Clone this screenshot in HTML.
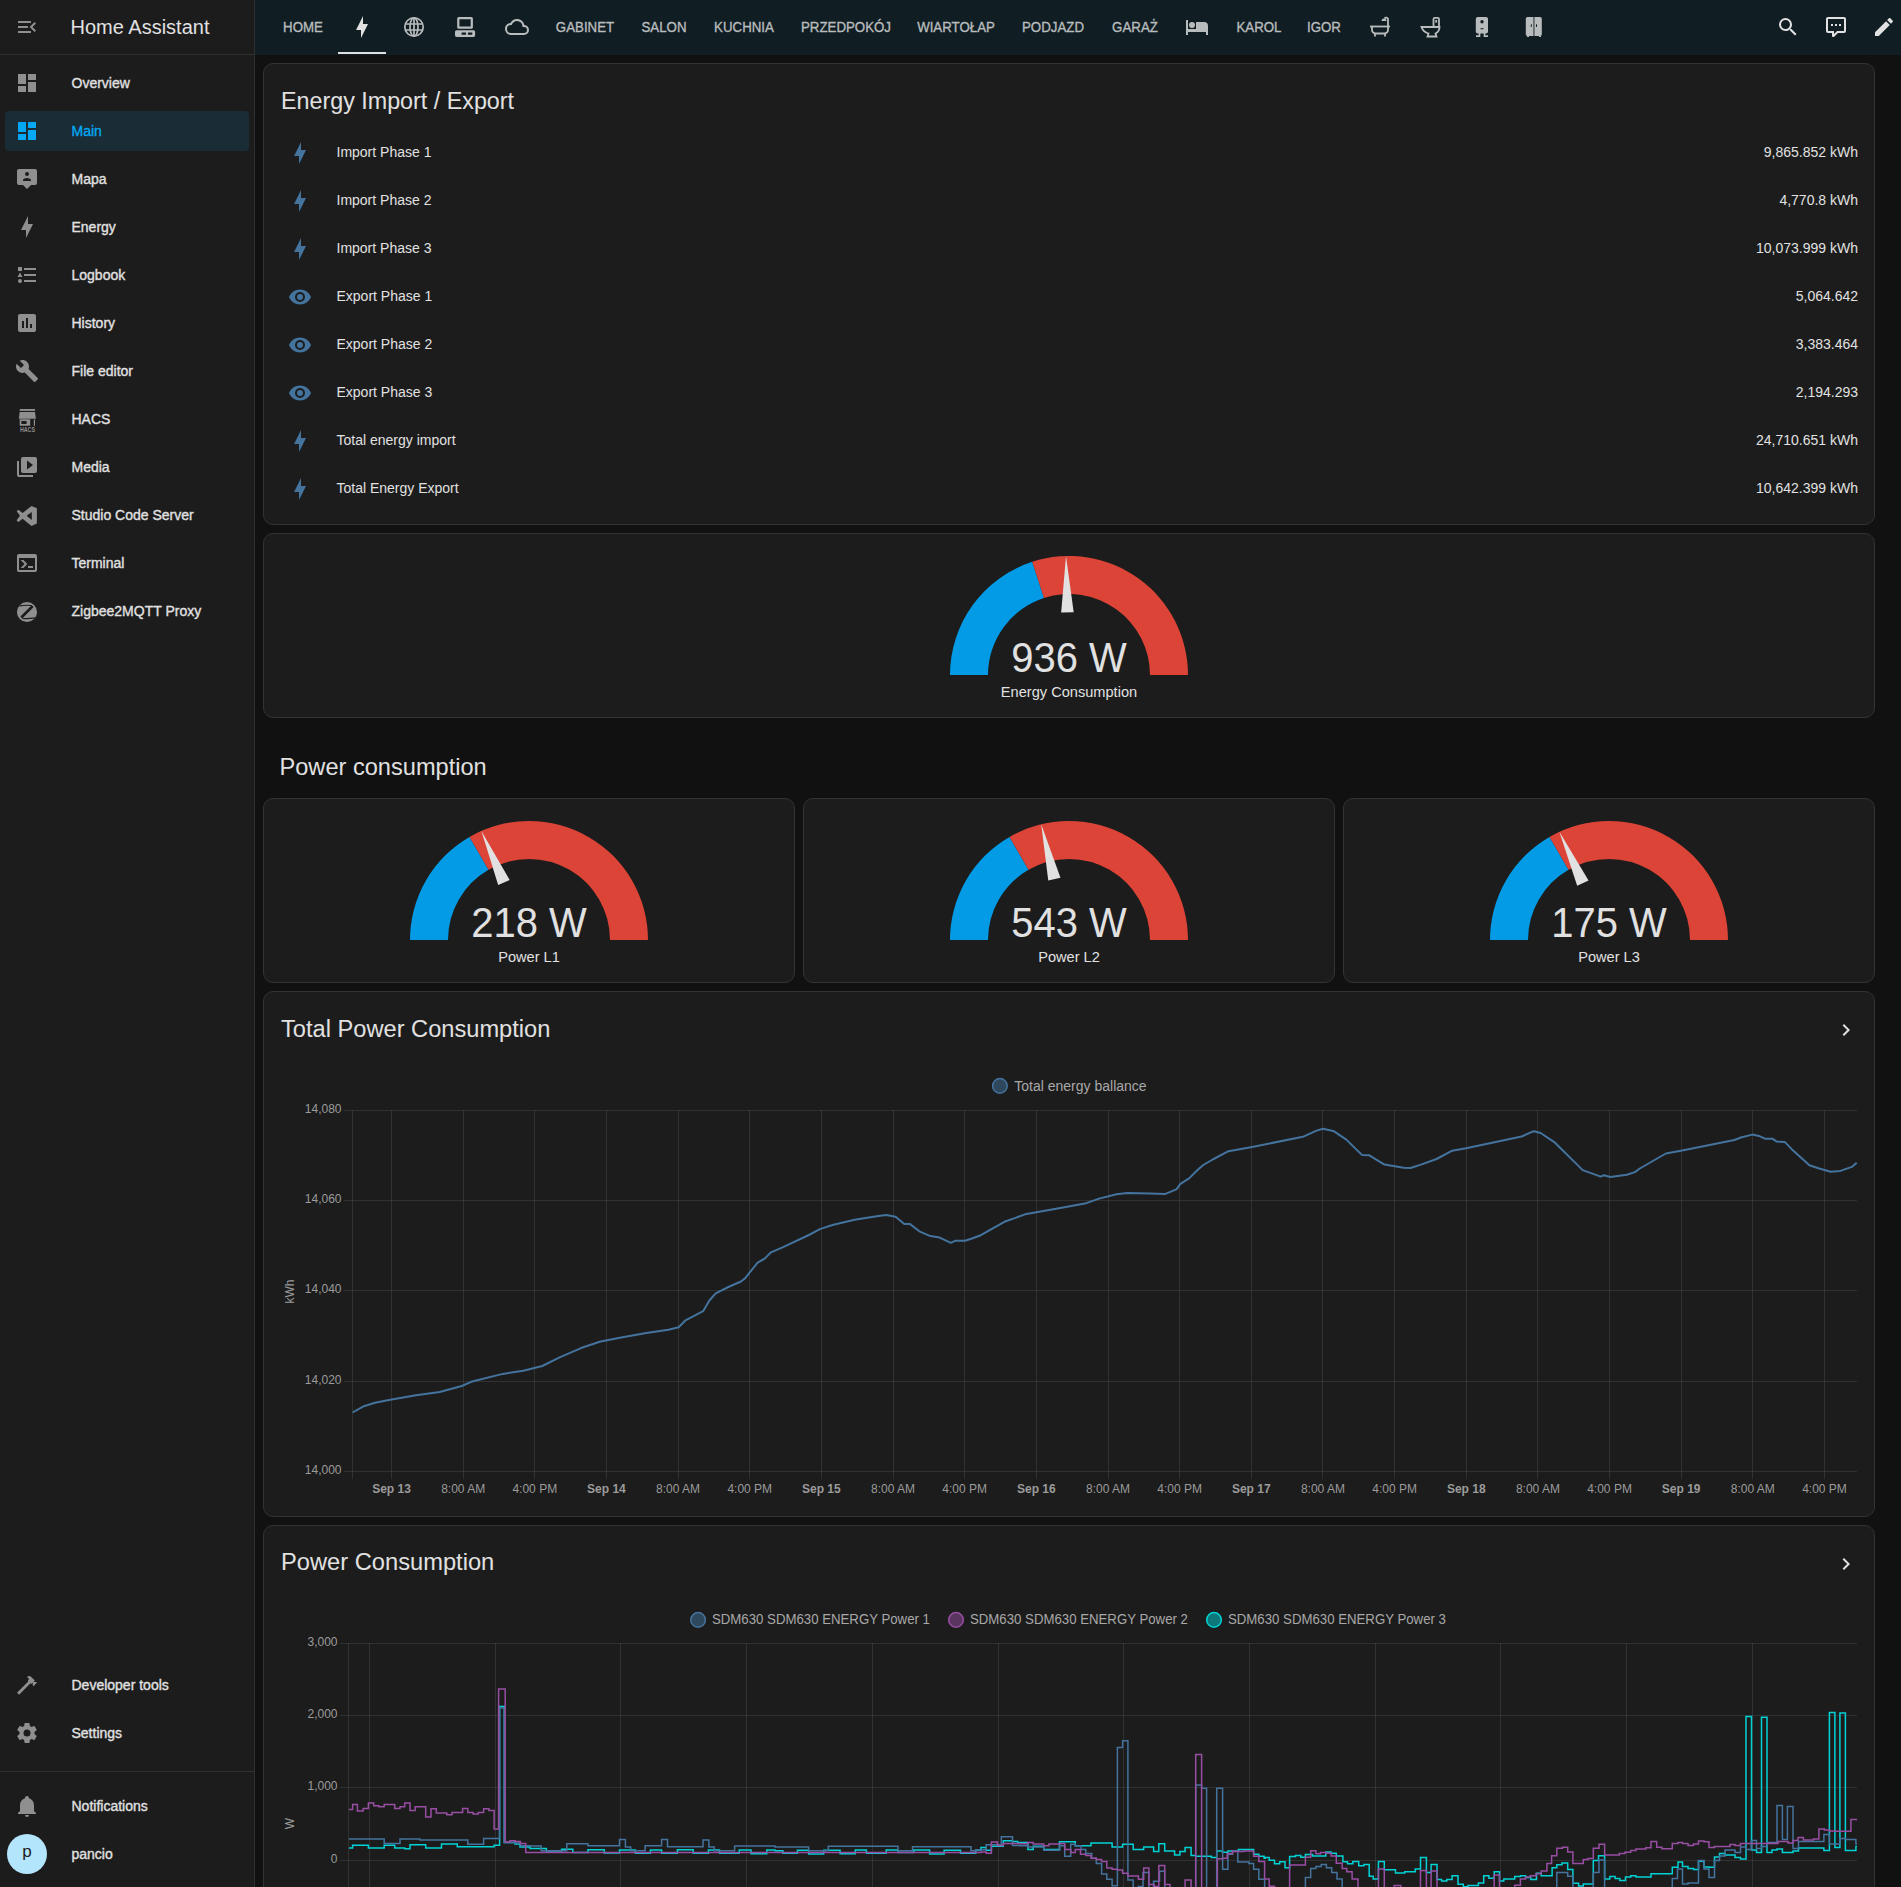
<!DOCTYPE html>
<html><head><meta charset="utf-8">
<style>
*{box-sizing:border-box;margin:0;padding:0}
html,body{width:1901px;height:1887px;overflow:hidden;background:#111111;font-family:"Liberation Sans",sans-serif;color:#e1e1e1}
.t{position:absolute;white-space:nowrap}
.i{position:absolute;overflow:visible}
.r{position:absolute}
.card{position:absolute;background:#1c1c1c;border:1px solid #333333;border-radius:10px}
</style></head><body>

<div class="r" style="left:0px;top:0px;width:254px;height:1887px;background:#1c1c1c;"></div>
<div class="r" style="left:254px;top:0px;width:1px;height:1887px;background:#2f2f2f;"></div>
<div class="r" style="left:0px;top:54px;width:254px;height:1px;background:#2f2f2f;"></div>
<svg class="i" style="left:15px;top:15px;width:24px;height:24px;fill:#8f8f8f;" viewBox="0 0 24 24"><path d="M21,15.61L19.59,17L14.58,12L19.59,7L21,8.39L17.44,12L21,15.61M3,6H16V8H3V6M3,13V11H13V13H3M3,18V16H16V18H3Z"/></svg>
<div class="t" style="top:14.57px;font-size:20px;line-height:25.00px;color:#e1e1e1;left:70.50px;">Home Assistant</div>
<svg class="i" style="left:15px;top:71px;width:24px;height:24px;fill:#8f8f8f;" viewBox="0 0 24 24"><path d="M13,3V9H21V3M13,21H21V11H13M3,21H11V15H3M3,13H11V3H3V13Z"/></svg>
<div class="t" style="top:75.30px;font-size:14px;line-height:17.50px;color:#e1e1e1;-webkit-text-stroke:0.35px #e1e1e1;left:71.50px;">Overview</div>
<div class="r" style="left:5px;top:111px;width:244px;height:40px;background:#1a2c35;border-radius:4px"></div>
<svg class="i" style="left:15px;top:119px;width:24px;height:24px;fill:#03a9f4;" viewBox="0 0 24 24"><path d="M13,3V9H21V3M13,21H21V11H13M3,21H11V15H3M3,13H11V3H3V13Z"/></svg>
<div class="t" style="top:123.30px;font-size:14px;line-height:17.50px;color:#03a9f4;-webkit-text-stroke:0.35px #03a9f4;left:71.50px;">Main</div>
<svg class="i" style="left:15px;top:167px;width:24px;height:24px;fill:#8f8f8f;" viewBox="0 0 24 24"><path d="M4,2H20A2,2 0 0,1 22,4V16A2,2 0 0,1 20,18H16L12,22L8,18H4A2,2 0 0,1 2,16V4A2,2 0 0,1 4,2M16,14V13C16,11.67 13.33,11 12,11C10.67,11 8,11.67 8,13V14H16M12,5A2,2 0 0,0 10,7A2,2 0 0,0 12,9A2,2 0 0,0 14,7A2,2 0 0,0 12,5Z"/></svg>
<div class="t" style="top:171.30px;font-size:14px;line-height:17.50px;color:#e1e1e1;-webkit-text-stroke:0.35px #e1e1e1;left:71.50px;">Mapa</div>
<svg class="i" style="left:15px;top:215px;width:24px;height:24px;fill:#8f8f8f;" viewBox="0 0 24 24"><path d="M11 15H6L13 1V9H18L11 23V15Z"/></svg>
<div class="t" style="top:219.30px;font-size:14px;line-height:17.50px;color:#e1e1e1;-webkit-text-stroke:0.35px #e1e1e1;left:71.50px;">Energy</div>
<svg class="i" style="left:15px;top:263px;width:24px;height:24px;fill:#8f8f8f;" viewBox="0 0 24 24"><path d="M5,9.5L7.5,14H2.5L5,9.5M3,4H7V8H3V4M5,20A2,2 0 0,0 7,18A2,2 0 0,0 5,16A2,2 0 0,0 3,18A2,2 0 0,0 5,20M9,5V7H21V5H9M9,19H21V17H9V19M9,13H21V11H9V13Z"/></svg>
<div class="t" style="top:267.30px;font-size:14px;line-height:17.50px;color:#e1e1e1;-webkit-text-stroke:0.35px #e1e1e1;left:71.50px;">Logbook</div>
<svg class="i" style="left:15px;top:311px;width:24px;height:24px;fill:#8f8f8f;" viewBox="0 0 24 24"><path d="M19 3H5C3.89 3 3 3.89 3 5V19A2 2 0 0 0 5 21H19A2 2 0 0 0 21 19V5C21 3.89 20.1 3 19 3M9 17H7V10H9V17M13 17H11V7H13V17M17 17H15V13H17V17Z"/></svg>
<div class="t" style="top:315.30px;font-size:14px;line-height:17.50px;color:#e1e1e1;-webkit-text-stroke:0.35px #e1e1e1;left:71.50px;">History</div>
<svg class="i" style="left:15px;top:359px;width:24px;height:24px;fill:#8f8f8f;" viewBox="0 0 24 24"><path d="M22.7,19L13.6,9.9C14.5,7.6 14,4.9 12.1,3C10.1,1 7.1,0.6 4.7,1.7L9,6L6,9L1.6,4.7C0.4,7.1 0.9,10.1 2.9,12.1C4.8,14 7.5,14.5 9.8,13.6L18.9,22.7C19.3,23.1 19.9,23.1 20.3,22.7L22.6,20.4C23.1,20 23.1,19.3 22.7,19Z"/></svg>
<div class="t" style="top:363.30px;font-size:14px;line-height:17.50px;color:#e1e1e1;-webkit-text-stroke:0.35px #e1e1e1;left:71.50px;">File editor</div>
<svg class="i" style="left:15px;top:407px;width:24px;height:24px;" viewBox="0 0 24 24"><g fill="#8f8f8f"><rect x="4.7" y="2" width="15.3" height="1.9"/><path d="M4.7 5H20L20.9 11.8H3.8Z"/><path d="M4.7 12.3H15.2V18.8H4.7ZM6.3 14V17.1H11.6V14Z" fill-rule="evenodd"/><rect x="18.8" y="12.5" width="1.2" height="6.3"/><text x="12.45" y="24.6" font-size="6.3" font-family="Liberation Sans" font-weight="bold" text-anchor="middle" textLength="15" lengthAdjust="spacingAndGlyphs">HACS</text></g></svg>
<div class="t" style="top:411.30px;font-size:14px;line-height:17.50px;color:#e1e1e1;-webkit-text-stroke:0.35px #e1e1e1;left:71.50px;">HACS</div>
<svg class="i" style="left:15px;top:455px;width:24px;height:24px;fill:#8f8f8f;" viewBox="0 0 24 24"><path d="M4,6H2V20A2,2 0 0,0 4,22H18V20H4V6M20,2H8A2,2 0 0,0 6,4V16A2,2 0 0,0 8,18H20A2,2 0 0,0 22,16V4A2,2 0 0,0 20,2M12,14.5V5.5L18,10L12,14.5Z"/></svg>
<div class="t" style="top:459.30px;font-size:14px;line-height:17.50px;color:#e1e1e1;-webkit-text-stroke:0.35px #e1e1e1;left:71.50px;">Media</div>
<svg class="i" style="left:15px;top:503px;width:24px;height:24px;" viewBox="0 0 24 24"><path fill="#8f8f8f" fill-rule="evenodd" d="M16.5 3L21.9 5.3V20.6L16.5 22.9L7.6 15.8L4.1 18.5Q3.3 19.1 2.6 18.4L2.1 17.9Q1.5 17.2 2.2 16.6L5 12.85L2.2 9.1Q1.5 8.5 2.1 7.8L2.6 7.3Q3.3 6.6 4.1 7.2L7.6 9.9ZM16.8 9L11.6 12.85L16.8 16.9Z"/></svg>
<div class="t" style="top:507.30px;font-size:14px;line-height:17.50px;color:#e1e1e1;-webkit-text-stroke:0.35px #e1e1e1;left:71.50px;">Studio Code Server</div>
<svg class="i" style="left:15px;top:551px;width:24px;height:24px;fill:#8f8f8f;" viewBox="0 0 24 24"><path d="M20,19V7H4V19H20M20,3A2,2 0 0,1 22,5V19A2,2 0 0,1 20,21H4A2,2 0 0,1 2,19V5C2,3.89 2.9,3 4,3H20M13,17V15H18V17H13M9.58,13L5.57,9H8.4L11.7,12.3C12.09,12.69 12.09,13.33 11.7,13.72L8.42,17H5.59L9.58,13Z"/></svg>
<div class="t" style="top:555.30px;font-size:14px;line-height:17.50px;color:#e1e1e1;-webkit-text-stroke:0.35px #e1e1e1;left:71.50px;">Terminal</div>
<svg class="i" style="left:15px;top:599px;width:24px;height:24px;" viewBox="0 0 24 24"><circle cx="12" cy="13" r="10.05" fill="#8f8f8f"/><g fill="none" stroke="#1c1c1c"><path d="M4.2 6.9Q10 5.9 16.8 6.5" stroke-width="1.1"/><path d="M17.7 7.1L6.3 18.5" stroke-width="2.7"/><path d="M7.4 19.5Q14 19.9 20.3 18.9" stroke-width="1.1"/></g></svg>
<div class="t" style="top:603.30px;font-size:14px;line-height:17.50px;color:#e1e1e1;-webkit-text-stroke:0.35px #e1e1e1;left:71.50px;">Zigbee2MQTT Proxy</div>
<svg class="i" style="left:15px;top:1673px;width:24px;height:24px;fill:#8f8f8f;" viewBox="0 0 24 24"><path d="M2 19.63L13.43 8.2L12.72 7.5L14.14 6.07L12 3.89C13.2 2.7 15.09 2.7 16.27 3.89L19.87 7.5L18.45 8.91H21.29L22 9.62L18.45 13.21L17.74 12.5V9.62L16.27 11.04L15.56 10.33L4.13 21.76L2 19.63Z"/></svg>
<div class="t" style="top:1677.30px;font-size:14px;line-height:17.50px;color:#e1e1e1;-webkit-text-stroke:0.35px #e1e1e1;left:71.50px;">Developer tools</div>
<svg class="i" style="left:15px;top:1721px;width:24px;height:24px;fill:#8f8f8f;" viewBox="0 0 24 24"><path d="M12,15.5A3.5,3.5 0 0,1 8.5,12A3.5,3.5 0 0,1 12,8.5A3.5,3.5 0 0,1 15.5,12A3.5,3.5 0 0,1 12,15.5M19.43,12.97C19.47,12.65 19.5,12.33 19.5,12C19.5,11.67 19.47,11.34 19.43,11L21.54,9.37C21.73,9.22 21.78,8.95 21.66,8.73L19.66,5.27C19.54,5.05 19.27,4.96 19.05,5.05L16.56,6.05C16.04,5.66 15.5,5.32 14.87,5.07L14.5,2.42C14.46,2.18 14.25,2 14,2H10C9.75,2 9.54,2.18 9.5,2.42L9.13,5.07C8.5,5.32 7.96,5.66 7.44,6.05L4.95,5.05C4.73,4.96 4.46,5.05 4.34,5.27L2.34,8.73C2.21,8.95 2.27,9.22 2.46,9.37L4.57,11C4.53,11.34 4.5,11.67 4.5,12C4.5,12.33 4.53,12.65 4.57,12.97L2.46,14.63C2.27,14.78 2.21,15.05 2.34,15.27L4.34,18.73C4.46,18.95 4.73,19.03 4.95,18.95L7.44,17.94C7.96,18.34 8.5,18.68 9.13,18.93L9.5,21.58C9.54,21.82 9.75,22 10,22H14C14.25,22 14.46,21.82 14.5,21.58L14.87,18.93C15.5,18.67 16.04,18.34 16.56,17.94L19.05,18.95C19.27,19.03 19.54,18.95 19.66,18.73L21.66,15.27C21.78,15.05 21.73,14.78 21.54,14.63L19.43,12.97Z"/></svg>
<div class="t" style="top:1725.30px;font-size:14px;line-height:17.50px;color:#e1e1e1;-webkit-text-stroke:0.35px #e1e1e1;left:71.50px;">Settings</div>
<div class="r" style="left:0px;top:1771px;width:254px;height:1px;background:#2f2f2f;"></div>
<svg class="i" style="left:15px;top:1794px;width:24px;height:24px;fill:#8f8f8f;" viewBox="0 0 24 24"><path d="M21,19V20H3V19L5,17V11C5,7.9 7.03,5.17 10,4.29C10,4.19 10,4.1 10,4A2,2 0 0,1 12,2A2,2 0 0,1 14,4C14,4.1 14,4.19 14,4.29C16.97,5.17 19,7.9 19,11V17L21,19M14,21A2,2 0 0,1 12,23A2,2 0 0,1 10,21"/></svg>
<div class="t" style="top:1798.30px;font-size:14px;line-height:17.50px;color:#e1e1e1;-webkit-text-stroke:0.35px #e1e1e1;left:71.50px;">Notifications</div>
<div class="r" style="left:7px;top:1834px;width:40px;height:40px;border-radius:50%;background:#b3e5fc"></div>
<div class="t" style="top:1841.48px;font-size:17px;line-height:21.25px;color:#1c1c1c;left:-373.00px;width:800px;text-align:center;">p</div>
<div class="t" style="top:1846.30px;font-size:14px;line-height:17.50px;color:#e1e1e1;-webkit-text-stroke:0.35px #e1e1e1;left:71.50px;">pancio</div>
<div class="r" style="left:255px;top:0px;width:1646px;height:55px;background:#101e24;"></div>
<div class="t" style="top:18.12px;font-size:14.6px;line-height:18.25px;color:#b9bcbd;-webkit-text-stroke:0.35px #b9bcbd;transform:scaleX(0.91);transform-origin:50% 50%;left:-97.00px;width:800px;text-align:center;">HOME</div>
<div class="t" style="top:18.12px;font-size:14.6px;line-height:18.25px;color:#b9bcbd;-webkit-text-stroke:0.35px #b9bcbd;transform:scaleX(0.91);transform-origin:50% 50%;left:184.50px;width:800px;text-align:center;">GABINET</div>
<div class="t" style="top:18.12px;font-size:14.6px;line-height:18.25px;color:#b9bcbd;-webkit-text-stroke:0.35px #b9bcbd;transform:scaleX(0.91);transform-origin:50% 50%;left:264.00px;width:800px;text-align:center;">SALON</div>
<div class="t" style="top:18.12px;font-size:14.6px;line-height:18.25px;color:#b9bcbd;-webkit-text-stroke:0.35px #b9bcbd;transform:scaleX(0.91);transform-origin:50% 50%;left:344.00px;width:800px;text-align:center;">KUCHNIA</div>
<div class="t" style="top:18.12px;font-size:14.6px;line-height:18.25px;color:#b9bcbd;-webkit-text-stroke:0.35px #b9bcbd;transform:scaleX(0.91);transform-origin:50% 50%;left:446.00px;width:800px;text-align:center;">PRZEDPOKÓJ</div>
<div class="t" style="top:18.12px;font-size:14.6px;line-height:18.25px;color:#b9bcbd;-webkit-text-stroke:0.35px #b9bcbd;transform:scaleX(0.91);transform-origin:50% 50%;left:556.00px;width:800px;text-align:center;">WIARTOŁAP</div>
<div class="t" style="top:18.12px;font-size:14.6px;line-height:18.25px;color:#b9bcbd;-webkit-text-stroke:0.35px #b9bcbd;transform:scaleX(0.91);transform-origin:50% 50%;left:653.00px;width:800px;text-align:center;">PODJAZD</div>
<div class="t" style="top:18.12px;font-size:14.6px;line-height:18.25px;color:#b9bcbd;-webkit-text-stroke:0.35px #b9bcbd;transform:scaleX(0.91);transform-origin:50% 50%;left:734.50px;width:800px;text-align:center;">GARAŻ</div>
<div class="t" style="top:18.12px;font-size:14.6px;line-height:18.25px;color:#b9bcbd;-webkit-text-stroke:0.35px #b9bcbd;transform:scaleX(0.91);transform-origin:50% 50%;left:859.00px;width:800px;text-align:center;">KAROL</div>
<div class="t" style="top:18.12px;font-size:14.6px;line-height:18.25px;color:#b9bcbd;-webkit-text-stroke:0.35px #b9bcbd;transform:scaleX(0.91);transform-origin:50% 50%;left:924.00px;width:800px;text-align:center;">IGOR</div>
<svg class="i" style="left:350px;top:15px;width:24px;height:24px;fill:#e1e1e1;" viewBox="0 0 24 24"><path d="M11 15H6L13 1V9H18L11 23V15Z"/></svg>
<div class="r" style="left:338px;top:52px;width:48px;height:2px;background:#e1e1e1;"></div>
<svg class="i" style="left:402px;top:15px;width:24px;height:24px;" viewBox="0 0 24 24"><g fill="none" stroke="#b9bcbd" stroke-width="1.7"><circle cx="12" cy="12" r="9.2"/><ellipse cx="12" cy="12" rx="4" ry="9.2"/><path d="M3 9H21M3 15H21M12 2.8V21.2"/></g></svg>
<svg class="i" style="left:453px;top:15px;width:24px;height:24px;" viewBox="0 0 24 24"><g fill="#b9bcbd"><path d="M5.8 2H18.3A1.6 1.6 0 0 1 19.9 3.6V12.2A1.6 1.6 0 0 1 18.3 13.8H5.8A1.6 1.6 0 0 1 4.2 12.2V3.6A1.6 1.6 0 0 1 5.8 2ZM6.4 4.2V11.6H17.7V4.2Z"/><path d="M3.6 15.2H20.5A1.6 1.6 0 0 1 22.1 16.8V20.3A1.6 1.6 0 0 1 20.5 21.9H3.6A1.6 1.6 0 0 1 2 20.3V16.8A1.6 1.6 0 0 1 3.6 15.2ZM8.6 17.5V19.7H13V17.5ZM14.9 17.5V19.7H19.3V17.5Z"/></g></svg>
<svg class="i" style="left:505px;top:15px;width:24px;height:24px;fill:#b9bcbd;" viewBox="0 0 24 24"><path d="M19,18H6A4,4 0 0,1 2,14A4,4 0 0,1 6,10H6.71C7.37,7.69 9.5,6 12,6A5.5,5.5 0 0,1 17.5,11.5V12H19A3,3 0 0,1 22,15A3,3 0 0,1 19,18M19.35,10.03C18.67,6.59 15.64,4 12,4C9.11,4 6.6,5.64 5.35,8.03C2.34,8.36 0,10.9 0,14A6,6 0 0,0 6,20H19A5,5 0 0,0 24,15C24,12.36 21.95,10.22 19.35,10.03Z"/></svg>
<svg class="i" style="left:1185px;top:15px;width:24px;height:24px;fill:#b9bcbd;" viewBox="0 0 24 24"><path d="M19,7H11V14H3V5H1V20H3V17H21V20H23V11A4,4 0 0,0 19,7M7,13A3,3 0 0,0 10,10A3,3 0 0,0 7,7A3,3 0 0,0 4,10A3,3 0 0,0 7,13Z"/></svg>
<svg class="i" style="left:1368px;top:15px;width:24px;height:24px;" viewBox="0 0 24 24"><g fill="none" stroke="#b9bcbd" stroke-width="1.8"><path d="M2 11.5H22"/><path d="M4 11.5V15A3.5 3.5 0 0 0 7.5 18.5H16.5A3.5 3.5 0 0 0 20 15V11.5"/><path d="M7 18.5V21.5M17 18.5V21.5"/><path d="M20 11.5V4A2 2 0 0 0 16.5 3.5"/></g><path fill="#b9bcbd" d="M13.5 6H18.5A2.5 2.5 0 0 0 13.5 6Z"/></svg>
<svg class="i" style="left:1419px;top:15px;width:24px;height:24px;" viewBox="0 0 24 24"><g fill="none" stroke="#b9bcbd" stroke-width="1.8"><rect x="14.5" y="2.8" width="5.5" height="9" rx="1.3"/><path d="M2.5 12H20.5C20.5 15.5 18.5 17.5 16.5 18.5L17.5 21.5H8.5L9.5 18.5C5.5 17.5 3.5 15 2.5 12Z"/></g><rect x="16.3" y="5" width="1.8" height="2.6" fill="#b9bcbd"/></svg>
<svg class="i" style="left:1470px;top:15px;width:24px;height:24px;" viewBox="0 0 24 24"><rect x="5.8" y="2" width="12.2" height="16.5" rx="2" fill="#b9bcbd"/><circle cx="12" cy="6.8" r="1.7" fill="#101e24"/><rect x="10.5" y="13.2" width="3" height="1" fill="#101e24"/><g fill="none" stroke="#b9bcbd" stroke-width="1.7"><path d="M9.5 18V21.2H6M14.5 18V21.2H18"/></g></svg>
<svg class="i" style="left:1522px;top:15px;width:24px;height:24px;" viewBox="0 0 24 24"><rect x="3.8" y="2" width="16" height="19" rx="1.8" fill="#b9bcbd"/><rect x="11.5" y="2" width="0.9" height="19" fill="#101e24"/><rect x="8.8" y="9.3" width="1" height="2.6" fill="#101e24"/><rect x="14" y="9.3" width="1" height="2.6" fill="#101e24"/><rect x="5" y="21" width="2" height="1" fill="#b9bcbd"/><rect x="17" y="21" width="2" height="1" fill="#b9bcbd"/></svg>
<svg class="i" style="left:1775.5px;top:15px;width:24px;height:24px;fill:#e1e1e1;" viewBox="0 0 24 24"><path d="M9.5,3A6.5,6.5 0 0,1 16,9.5C16,11.11 15.41,12.59 14.44,13.73L14.71,14H15.5L20.5,19L19,20.5L14,15.5V14.71L13.73,14.44C12.59,15.41 11.11,16 9.5,16A6.5,6.5 0 0,1 3,9.5A6.5,6.5 0 0,1 9.5,3M9.5,5C7,5 5,7 5,9.5C5,12 7,14 9.5,14C12,14 14,12 14,9.5C14,7 12,5 9.5,5Z"/></svg>
<svg class="i" style="left:1824px;top:15px;width:24px;height:24px;fill:#e1e1e1;" viewBox="0 0 24 24"><path d="M9,22A1,1 0 0,1 8,21V18H4A2,2 0 0,1 2,16V4C2,2.89 2.9,2 4,2H20A2,2 0 0,1 22,4V16A2,2 0 0,1 20,18H13.9L10.2,21.71C10,21.9 9.75,22 9.5,22V22H9M10,16V19.08L13.08,16H20V4H4V16H10M17,11H15V9H17V11M13,11H11V9H13V11M9,11H7V9H9V11Z"/></svg>
<svg class="i" style="left:1871.5px;top:15px;width:24px;height:24px;fill:#e1e1e1;" viewBox="0 0 24 24"><path d="M20.71,7.04C21.1,6.65 21.1,6 20.71,5.630L18.37,3.29C18,2.9 17.35,2.9 16.96,3.29L15.12,5.12L18.87,8.87M3,17.25V21H6.75L17.81,9.93L14.06,6.18L3,17.25Z"/></svg>
<div class="card" style="left:263px;top:63px;width:1612px;height:462px"></div>
<div class="t" style="top:86.86px;font-size:23.3px;line-height:29.12px;color:#e1e1e1;left:281.00px;">Energy Import / Export</div>
<svg class="i" style="left:287.6px;top:141px;width:24px;height:24px;fill:#44739e;" viewBox="0 0 24 24"><path d="M11 15H6L13 1V9H18L11 23V15Z"/></svg>
<div class="t" style="top:143.90px;font-size:14px;line-height:17.50px;color:#e1e1e1;left:336.50px;">Import Phase 1</div>
<div class="t" style="top:143.90px;font-size:14px;line-height:17.50px;color:#e1e1e1;right:43.00px;text-align:right;">9,865.852 kWh</div>
<svg class="i" style="left:287.6px;top:189px;width:24px;height:24px;fill:#44739e;" viewBox="0 0 24 24"><path d="M11 15H6L13 1V9H18L11 23V15Z"/></svg>
<div class="t" style="top:191.90px;font-size:14px;line-height:17.50px;color:#e1e1e1;left:336.50px;">Import Phase 2</div>
<div class="t" style="top:191.90px;font-size:14px;line-height:17.50px;color:#e1e1e1;right:43.00px;text-align:right;">4,770.8 kWh</div>
<svg class="i" style="left:287.6px;top:237px;width:24px;height:24px;fill:#44739e;" viewBox="0 0 24 24"><path d="M11 15H6L13 1V9H18L11 23V15Z"/></svg>
<div class="t" style="top:239.90px;font-size:14px;line-height:17.50px;color:#e1e1e1;left:336.50px;">Import Phase 3</div>
<div class="t" style="top:239.90px;font-size:14px;line-height:17.50px;color:#e1e1e1;right:43.00px;text-align:right;">10,073.999 kWh</div>
<svg class="i" style="left:287.6px;top:285px;width:24px;height:24px;fill:#44739e;" viewBox="0 0 24 24"><path d="M12,9A3,3 0 0,0 9,12A3,3 0 0,0 12,15A3,3 0 0,0 15,12A3,3 0 0,0 12,9M12,17A5,5 0 0,1 7,12A5,5 0 0,1 12,7A5,5 0 0,1 17,12A5,5 0 0,1 12,17M12,4.5C7,4.5 2.73,7.61 1,12C2.73,16.39 7,19.5 12,19.5C17,19.5 21.27,16.39 23,12C21.27,7.61 17,4.5 12,4.5Z"/></svg>
<div class="t" style="top:287.90px;font-size:14px;line-height:17.50px;color:#e1e1e1;left:336.50px;">Export Phase 1</div>
<div class="t" style="top:287.90px;font-size:14px;line-height:17.50px;color:#e1e1e1;right:43.00px;text-align:right;">5,064.642</div>
<svg class="i" style="left:287.6px;top:333px;width:24px;height:24px;fill:#44739e;" viewBox="0 0 24 24"><path d="M12,9A3,3 0 0,0 9,12A3,3 0 0,0 12,15A3,3 0 0,0 15,12A3,3 0 0,0 12,9M12,17A5,5 0 0,1 7,12A5,5 0 0,1 12,7A5,5 0 0,1 17,12A5,5 0 0,1 12,17M12,4.5C7,4.5 2.73,7.61 1,12C2.73,16.39 7,19.5 12,19.5C17,19.5 21.27,16.39 23,12C21.27,7.61 17,4.5 12,4.5Z"/></svg>
<div class="t" style="top:335.90px;font-size:14px;line-height:17.50px;color:#e1e1e1;left:336.50px;">Export Phase 2</div>
<div class="t" style="top:335.90px;font-size:14px;line-height:17.50px;color:#e1e1e1;right:43.00px;text-align:right;">3,383.464</div>
<svg class="i" style="left:287.6px;top:381px;width:24px;height:24px;fill:#44739e;" viewBox="0 0 24 24"><path d="M12,9A3,3 0 0,0 9,12A3,3 0 0,0 12,15A3,3 0 0,0 15,12A3,3 0 0,0 12,9M12,17A5,5 0 0,1 7,12A5,5 0 0,1 12,7A5,5 0 0,1 17,12A5,5 0 0,1 12,17M12,4.5C7,4.5 2.73,7.61 1,12C2.73,16.39 7,19.5 12,19.5C17,19.5 21.27,16.39 23,12C21.27,7.61 17,4.5 12,4.5Z"/></svg>
<div class="t" style="top:383.90px;font-size:14px;line-height:17.50px;color:#e1e1e1;left:336.50px;">Export Phase 3</div>
<div class="t" style="top:383.90px;font-size:14px;line-height:17.50px;color:#e1e1e1;right:43.00px;text-align:right;">2,194.293</div>
<svg class="i" style="left:287.6px;top:429px;width:24px;height:24px;fill:#44739e;" viewBox="0 0 24 24"><path d="M11 15H6L13 1V9H18L11 23V15Z"/></svg>
<div class="t" style="top:431.90px;font-size:14px;line-height:17.50px;color:#e1e1e1;left:336.50px;">Total energy import</div>
<div class="t" style="top:431.90px;font-size:14px;line-height:17.50px;color:#e1e1e1;right:43.00px;text-align:right;">24,710.651 kWh</div>
<svg class="i" style="left:287.6px;top:477px;width:24px;height:24px;fill:#44739e;" viewBox="0 0 24 24"><path d="M11 15H6L13 1V9H18L11 23V15Z"/></svg>
<div class="t" style="top:479.90px;font-size:14px;line-height:17.50px;color:#e1e1e1;left:336.50px;">Total Energy Export</div>
<div class="t" style="top:479.90px;font-size:14px;line-height:17.50px;color:#e1e1e1;right:43.00px;text-align:right;">10,642.399 kWh</div>
<div class="card" style="left:263px;top:533px;width:1612px;height:185px"></div>
<svg class="i" style="left:0;top:0;width:1901px;height:1887px" viewBox="0 0 1901 1887"><path fill="#039be5" d="M950.00 675.00A119 119 0 0 1 1032.23 561.82L1043.97 597.96A81 81 0 0 0 988.00 675.00Z"/><path fill="#db4437" d="M1032.23 561.82A119 119 0 0 1 1188.00 675.00L1150.00 675.00A81 81 0 0 0 1043.97 597.96Z"/><path fill="#e1e1e1" d="M1073.69 612.23L1066.01 556.04L1061.16 612.55Z"/></svg>
<div class="t" style="top:631.21px;font-size:42.5px;line-height:53.12px;color:#e1e1e1;transform:scaleX(0.94);transform-origin:50% 50%;left:669.00px;width:800px;text-align:center;">936 W</div>
<div class="t" style="top:683.12px;font-size:14.6px;line-height:18.25px;color:#e1e1e1;left:669.00px;width:800px;text-align:center;">Energy Consumption</div>
<div class="t" style="top:752.57px;font-size:23.6px;line-height:29.50px;color:#e1e1e1;left:279.50px;">Power consumption</div>
<div class="card" style="left:263px;top:798px;width:532px;height:185px"></div>
<svg class="i" style="left:0;top:0;width:1901px;height:1887px" viewBox="0 0 1901 1887"><path fill="#039be5" d="M410.00 940.00A119 119 0 0 1 469.50 836.94L488.50 869.85A81 81 0 0 0 448.00 940.00Z"/><path fill="#db4437" d="M469.50 836.94A119 119 0 0 1 648.00 940.00L610.00 940.00A81 81 0 0 0 488.50 869.85Z"/><path fill="#e1e1e1" d="M509.69 880.09L481.40 830.94L498.21 885.10Z"/></svg>
<div class="t" style="top:895.71px;font-size:42.5px;line-height:53.12px;color:#e1e1e1;transform:scaleX(0.94);transform-origin:50% 50%;left:129.00px;width:800px;text-align:center;">218 W</div>
<div class="t" style="top:948.02px;font-size:14.6px;line-height:18.25px;color:#e1e1e1;left:129.00px;width:800px;text-align:center;">Power L1</div>
<div class="card" style="left:803px;top:798px;width:532px;height:185px"></div>
<svg class="i" style="left:0;top:0;width:1901px;height:1887px" viewBox="0 0 1901 1887"><path fill="#039be5" d="M950.00 940.00A119 119 0 0 1 1009.50 836.94L1028.50 869.85A81 81 0 0 0 988.00 940.00Z"/><path fill="#db4437" d="M1009.50 836.94A119 119 0 0 1 1188.00 940.00L1150.00 940.00A81 81 0 0 0 1028.50 869.85Z"/><path fill="#e1e1e1" d="M1060.47 877.64L1041.22 824.29L1048.29 880.56Z"/></svg>
<div class="t" style="top:895.71px;font-size:42.5px;line-height:53.12px;color:#e1e1e1;transform:scaleX(0.94);transform-origin:50% 50%;left:669.00px;width:800px;text-align:center;">543 W</div>
<div class="t" style="top:948.02px;font-size:14.6px;line-height:18.25px;color:#e1e1e1;left:669.00px;width:800px;text-align:center;">Power L2</div>
<div class="card" style="left:1343px;top:798px;width:532px;height:185px"></div>
<svg class="i" style="left:0;top:0;width:1901px;height:1887px" viewBox="0 0 1901 1887"><path fill="#039be5" d="M1490.00 940.00A119 119 0 0 1 1549.50 836.94L1568.50 869.85A81 81 0 0 0 1528.00 940.00Z"/><path fill="#db4437" d="M1549.50 836.94A119 119 0 0 1 1728.00 940.00L1690.00 940.00A81 81 0 0 0 1568.50 869.85Z"/><path fill="#e1e1e1" d="M1588.56 880.47L1559.35 831.85L1577.18 885.69Z"/></svg>
<div class="t" style="top:895.71px;font-size:42.5px;line-height:53.12px;color:#e1e1e1;transform:scaleX(0.94);transform-origin:50% 50%;left:1209.00px;width:800px;text-align:center;">175 W</div>
<div class="t" style="top:948.02px;font-size:14.6px;line-height:18.25px;color:#e1e1e1;left:1209.00px;width:800px;text-align:center;">Power L3</div>
<div class="card" style="left:263px;top:991px;width:1612px;height:526px"></div>
<div class="t" style="top:1015.02px;font-size:23.65px;line-height:29.56px;color:#e1e1e1;left:281.00px;">Total Power Consumption</div>
<svg class="i" style="left:1834px;top:1018px;width:24px;height:24px;fill:#e1e1e1;" viewBox="0 0 24 24"><path d="M8.59,16.58L13.17,12L8.59,7.41L10,6L16,12L10,18L8.59,16.58Z"/></svg>
<svg class="i" style="left:0;top:0;width:1901px;height:1887px" viewBox="0 0 1901 1887">
<circle cx="999.9" cy="1085.9" r="7.3" fill="rgba(68,115,158,0.5)" stroke="#44739e" stroke-width="1.5"/>
<rect x="344" y="1110" width="1513" height="1" fill="rgba(225,225,225,0.11)"/>
<rect x="344" y="1200" width="1513" height="1" fill="rgba(225,225,225,0.11)"/>
<rect x="344" y="1290" width="1513" height="1" fill="rgba(225,225,225,0.11)"/>
<rect x="344" y="1381" width="1513" height="1" fill="rgba(225,225,225,0.11)"/>
<rect x="344" y="1471" width="1513" height="1" fill="rgba(225,225,225,0.11)"/>
<rect x="352" y="1110" width="1" height="369" fill="rgba(225,225,225,0.11)"/>
<rect x="391" y="1110" width="1" height="369" fill="rgba(225,225,225,0.11)"/>
<rect x="463" y="1110" width="1" height="369" fill="rgba(225,225,225,0.11)"/>
<rect x="534" y="1110" width="1" height="369" fill="rgba(225,225,225,0.11)"/>
<rect x="606" y="1110" width="1" height="369" fill="rgba(225,225,225,0.11)"/>
<rect x="678" y="1110" width="1" height="369" fill="rgba(225,225,225,0.11)"/>
<rect x="749" y="1110" width="1" height="369" fill="rgba(225,225,225,0.11)"/>
<rect x="821" y="1110" width="1" height="369" fill="rgba(225,225,225,0.11)"/>
<rect x="893" y="1110" width="1" height="369" fill="rgba(225,225,225,0.11)"/>
<rect x="964" y="1110" width="1" height="369" fill="rgba(225,225,225,0.11)"/>
<rect x="1036" y="1110" width="1" height="369" fill="rgba(225,225,225,0.11)"/>
<rect x="1108" y="1110" width="1" height="369" fill="rgba(225,225,225,0.11)"/>
<rect x="1179" y="1110" width="1" height="369" fill="rgba(225,225,225,0.11)"/>
<rect x="1251" y="1110" width="1" height="369" fill="rgba(225,225,225,0.11)"/>
<rect x="1322" y="1110" width="1" height="369" fill="rgba(225,225,225,0.11)"/>
<rect x="1394" y="1110" width="1" height="369" fill="rgba(225,225,225,0.11)"/>
<rect x="1466" y="1110" width="1" height="369" fill="rgba(225,225,225,0.11)"/>
<rect x="1537" y="1110" width="1" height="369" fill="rgba(225,225,225,0.11)"/>
<rect x="1609" y="1110" width="1" height="369" fill="rgba(225,225,225,0.11)"/>
<rect x="1681" y="1110" width="1" height="369" fill="rgba(225,225,225,0.11)"/>
<rect x="1752" y="1110" width="1" height="369" fill="rgba(225,225,225,0.11)"/>
<rect x="1824" y="1110" width="1" height="369" fill="rgba(225,225,225,0.11)"/>
<path d="M352.6 1412.5L363.9 1406.2L375.0 1402.7L391.6 1399.6L416.0 1395.2L439.7 1392.0L461.8 1386.0L471.2 1381.8L502.8 1373.9L523.3 1370.7L542.3 1366.0L559.6 1357.3L581.7 1347.8L600.6 1341.5L621.2 1337.6L644.8 1333.3L668.4 1329.7L678.7 1327.3L685.0 1320.7L703.1 1311.2L709.4 1300.5L715.7 1293.4L728.4 1287.0L741.0 1281.5L745.0 1278.4L757.6 1262.6L764.7 1258.6L771.0 1252.3L782.0 1247.6L808.9 1235.0L819.9 1229.1L832.5 1225.0L854.6 1219.7L878.3 1216.0L886.2 1214.9L895.6 1216.8L904.3 1223.9L909.8 1223.9L919.3 1231.3L930.4 1236.1L939.7 1237.6L950.8 1242.8L955.5 1240.7L965.0 1240.7L971.3 1238.7L980.8 1235.2L1004.4 1221.8L1026.5 1213.9L1053.4 1209.2L1084.9 1203.6L1099.1 1198.6L1116.5 1194.2L1127.5 1192.9L1149.6 1193.4L1165.4 1193.9L1176.4 1189.4L1180.4 1183.9L1189.1 1178.4L1197.0 1170.5L1203.3 1165.0L1212.7 1159.5L1228.5 1151.2L1250.8 1147.2L1302.9 1136.8L1315.9 1130.9L1322.9 1128.8L1333.3 1130.9L1346.3 1139.6L1361.9 1154.9L1368.9 1155.2L1384.5 1164.6L1403.6 1167.7L1410.5 1168.0L1420.9 1164.6L1436.6 1159.0L1452.2 1150.7L1466.1 1148.3L1521.6 1136.5L1533.8 1131.2L1540.7 1133.0L1555.0 1142.7L1582.7 1170.1L1600.7 1176.6L1603.9 1175.3L1610.4 1177.0L1626.8 1174.7L1634.9 1172.1L1639.8 1168.5L1665.9 1153.5L1682.2 1150.6L1734.4 1140.0L1740.9 1137.5L1752.3 1134.6L1758.9 1135.9L1765.4 1138.8L1772.7 1138.8L1776.8 1141.6L1785.0 1142.1L1793.1 1150.6L1809.4 1165.2L1819.2 1168.5L1830.6 1171.8L1840.4 1170.9L1851.8 1166.9L1856.7 1162.8" fill="none" stroke="#44739e" stroke-width="2" stroke-linejoin="round"/>
</svg>
<div class="t" style="top:1077.70px;font-size:14px;line-height:17.50px;color:#a8a8a8;left:1014.30px;">Total energy ballance</div>
<div class="t" style="top:1101.64px;font-size:12px;line-height:15.00px;color:#9b9b9b;right:1559.50px;text-align:right;">14,080</div>
<div class="t" style="top:1191.64px;font-size:12px;line-height:15.00px;color:#9b9b9b;right:1559.50px;text-align:right;">14,060</div>
<div class="t" style="top:1281.64px;font-size:12px;line-height:15.00px;color:#9b9b9b;right:1559.50px;text-align:right;">14,040</div>
<div class="t" style="top:1372.64px;font-size:12px;line-height:15.00px;color:#9b9b9b;right:1559.50px;text-align:right;">14,020</div>
<div class="t" style="top:1462.64px;font-size:12px;line-height:15.00px;color:#9b9b9b;right:1559.50px;text-align:right;">14,000</div>
<div class="t" style="top:1283.84px;font-size:12px;line-height:15.00px;color:#9b9b9b;left:89.50px;width:400px;text-align:center;transform:rotate(-90deg);transform-origin:200px 50%;">kWh</div>
<div class="t" style="top:1481.74px;font-size:12px;line-height:15.00px;color:#9b9b9b;font-weight:bold;left:191.50px;width:400px;text-align:center;">Sep 13</div>
<div class="t" style="top:1481.74px;font-size:12px;line-height:15.00px;color:#9b9b9b;left:263.15px;width:400px;text-align:center;">8:00 AM</div>
<div class="t" style="top:1481.74px;font-size:12px;line-height:15.00px;color:#9b9b9b;left:334.80px;width:400px;text-align:center;">4:00 PM</div>
<div class="t" style="top:1481.74px;font-size:12px;line-height:15.00px;color:#9b9b9b;font-weight:bold;left:406.45px;width:400px;text-align:center;">Sep 14</div>
<div class="t" style="top:1481.74px;font-size:12px;line-height:15.00px;color:#9b9b9b;left:478.10px;width:400px;text-align:center;">8:00 AM</div>
<div class="t" style="top:1481.74px;font-size:12px;line-height:15.00px;color:#9b9b9b;left:549.75px;width:400px;text-align:center;">4:00 PM</div>
<div class="t" style="top:1481.74px;font-size:12px;line-height:15.00px;color:#9b9b9b;font-weight:bold;left:621.40px;width:400px;text-align:center;">Sep 15</div>
<div class="t" style="top:1481.74px;font-size:12px;line-height:15.00px;color:#9b9b9b;left:693.05px;width:400px;text-align:center;">8:00 AM</div>
<div class="t" style="top:1481.74px;font-size:12px;line-height:15.00px;color:#9b9b9b;left:764.70px;width:400px;text-align:center;">4:00 PM</div>
<div class="t" style="top:1481.74px;font-size:12px;line-height:15.00px;color:#9b9b9b;font-weight:bold;left:836.35px;width:400px;text-align:center;">Sep 16</div>
<div class="t" style="top:1481.74px;font-size:12px;line-height:15.00px;color:#9b9b9b;left:908.00px;width:400px;text-align:center;">8:00 AM</div>
<div class="t" style="top:1481.74px;font-size:12px;line-height:15.00px;color:#9b9b9b;left:979.65px;width:400px;text-align:center;">4:00 PM</div>
<div class="t" style="top:1481.74px;font-size:12px;line-height:15.00px;color:#9b9b9b;font-weight:bold;left:1051.30px;width:400px;text-align:center;">Sep 17</div>
<div class="t" style="top:1481.74px;font-size:12px;line-height:15.00px;color:#9b9b9b;left:1122.95px;width:400px;text-align:center;">8:00 AM</div>
<div class="t" style="top:1481.74px;font-size:12px;line-height:15.00px;color:#9b9b9b;left:1194.60px;width:400px;text-align:center;">4:00 PM</div>
<div class="t" style="top:1481.74px;font-size:12px;line-height:15.00px;color:#9b9b9b;font-weight:bold;left:1266.25px;width:400px;text-align:center;">Sep 18</div>
<div class="t" style="top:1481.74px;font-size:12px;line-height:15.00px;color:#9b9b9b;left:1337.90px;width:400px;text-align:center;">8:00 AM</div>
<div class="t" style="top:1481.74px;font-size:12px;line-height:15.00px;color:#9b9b9b;left:1409.55px;width:400px;text-align:center;">4:00 PM</div>
<div class="t" style="top:1481.74px;font-size:12px;line-height:15.00px;color:#9b9b9b;font-weight:bold;left:1481.20px;width:400px;text-align:center;">Sep 19</div>
<div class="t" style="top:1481.74px;font-size:12px;line-height:15.00px;color:#9b9b9b;left:1552.85px;width:400px;text-align:center;">8:00 AM</div>
<div class="t" style="top:1481.74px;font-size:12px;line-height:15.00px;color:#9b9b9b;left:1624.50px;width:400px;text-align:center;">4:00 PM</div>
<div class="card" style="left:263px;top:1525px;width:1612px;height:500px"></div>
<div class="t" style="top:1548.48px;font-size:23.7px;line-height:29.62px;color:#e1e1e1;left:281.00px;">Power Consumption</div>
<svg class="i" style="left:1834px;top:1552px;width:24px;height:24px;fill:#e1e1e1;" viewBox="0 0 24 24"><path d="M8.59,16.58L13.17,12L8.59,7.41L10,6L16,12L10,18L8.59,16.58Z"/></svg>
<svg class="i" style="left:0;top:0;width:1901px;height:1887px" viewBox="0 0 1901 1887">
<defs><clipPath id="pc"><rect x="348" y="1600" width="1509" height="300"/></clipPath></defs>
<circle cx="698.1" cy="1619.9" r="7.3" fill="rgba(68,115,158,0.5)" stroke="#44739e" stroke-width="1.5"/>
<circle cx="956" cy="1619.9" r="7.3" fill="rgba(152,78,163,0.5)" stroke="#984ea3" stroke-width="1.5"/>
<circle cx="1214" cy="1619.9" r="7.3" fill="rgba(0,210,213,0.5)" stroke="#00d2d5" stroke-width="1.5"/>
<rect x="340" y="1643" width="1517" height="1" fill="rgba(225,225,225,0.11)"/>
<rect x="340" y="1715" width="1517" height="1" fill="rgba(225,225,225,0.11)"/>
<rect x="340" y="1787" width="1517" height="1" fill="rgba(225,225,225,0.11)"/>
<rect x="340" y="1860" width="1517" height="1" fill="rgba(225,225,225,0.11)"/>
<rect x="348" y="1643" width="1" height="300" fill="rgba(225,225,225,0.11)"/>
<rect x="369" y="1643" width="1" height="300" fill="rgba(225,225,225,0.11)"/>
<rect x="495" y="1643" width="1" height="300" fill="rgba(225,225,225,0.11)"/>
<rect x="620" y="1643" width="1" height="300" fill="rgba(225,225,225,0.11)"/>
<rect x="746" y="1643" width="1" height="300" fill="rgba(225,225,225,0.11)"/>
<rect x="872" y="1643" width="1" height="300" fill="rgba(225,225,225,0.11)"/>
<rect x="998" y="1643" width="1" height="300" fill="rgba(225,225,225,0.11)"/>
<rect x="1123" y="1643" width="1" height="300" fill="rgba(225,225,225,0.11)"/>
<rect x="1249" y="1643" width="1" height="300" fill="rgba(225,225,225,0.11)"/>
<rect x="1375" y="1643" width="1" height="300" fill="rgba(225,225,225,0.11)"/>
<rect x="1500" y="1643" width="1" height="300" fill="rgba(225,225,225,0.11)"/>
<rect x="1626" y="1643" width="1" height="300" fill="rgba(225,225,225,0.11)"/>
<rect x="1752" y="1643" width="1" height="300" fill="rgba(225,225,225,0.11)"/>
<g clip-path="url(#pc)" fill="none" stroke-width="1.5">
<path d="M348.9 1847.9H352.6V1845.2H368.4V1847.9H384.2V1845.2H394.7V1847.9H404.7V1848.7H410.0V1844.7H425.7V1848.0H441.5V1843.9H457.3V1846.8H494.1V1845.2H499.6V1706.6H504.3V1842.6H515.0V1844.0H520.0V1847.0H530.0V1848.4H546.4V1851.0H561.6V1849.3H572.8V1852.6H587.9V1849.7H604.3V1852.9H619.5V1850.0H635.3V1853.3H650.4V1850.0H661.6V1853.3H677.4V1849.7H693.2V1853.3H708.4V1850.0H719.5V1853.3H739.2V1850.0H751.0V1853.7H766.8V1850.0H775.0V1850.7H782.9V1853.3H797.4V1850.3H808.6V1853.9H823.7V1850.3H840.1V1853.7H855.3V1850.0H866.4V1853.3H886.2V1850.0H898.0V1852.6H913.8V1850.0H929.6V1853.9H944.1V1850.3H960.5V1853.3H975.7V1850.0H980.9V1847.6H986.2V1850.3H991.4V1846.3H1003.3V1840.8H1012.5V1841.4H1017.8V1842.8H1020.0V1842.4H1027.9V1849.6H1033.2V1846.3H1043.7V1849.6H1059.5V1841.7H1075.3V1845.7H1091.0V1843.0H1112.1V1847.0H1122.6V1844.3H1133.2V1849.6H1143.7V1847.0H1153.6V1851.6H1158.8V1843.7H1164.7V1850.9H1174.6V1854.9H1179.9V1851.6H1185.1V1847.4H1191.1V1855.5H1195.7V1856.2H1211.4V1857.5H1216.7V1850.9H1222.6V1852.2H1227.9V1850.9H1238.4V1849.6H1253.6V1854.2H1258.8V1856.2H1264.1V1858.2H1265.3V1857.6H1269.2V1860.3H1274.5V1863.8H1279.7V1861.8H1285.0V1867.8H1289.6V1856.6H1295.5V1855.5H1300.8V1857.2H1305.4V1854.6H1312.6V1855.9H1325.8V1852.0H1331.1V1853.3H1336.3V1855.9H1342.9V1861.8H1347.5V1863.8H1352.8V1861.6H1358.7V1865.8H1363.9V1864.5H1369.2V1876.3H1373.2V1879.0H1378.4V1861.6H1384.3V1869.7H1395.5V1873.0H1404.7V1871.7H1415.3V1869.1H1420.5V1857.6H1426.4V1872.4H1431.1V1864.5H1437.0V1879.6H1441.6V1880.9H1446.8V1879.6H1452.1V1875.7H1458.0V1884.2H1463.3V1886.8H1467.9V1885.5H1478.4V1882.9H1483.7V1875.7H1488.9V1878.3H1494.2V1871.7H1499.5V1880.9H1503.8V1879.0H1514.7V1876.6H1520.4V1875.7H1525.6V1877.6H1530.8V1879.5H1536.5V1873.3H1541.2V1875.7H1552.1V1867.7H1556.8V1864.8H1562.0V1862.9H1567.7V1869.5H1572.9V1883.3H1578.6V1886.0H1583.3V1883.9H1593.3V1860.5H1598.5V1855.8H1604.6V1879.0H1609.8V1876.6H1615.1V1878.5H1619.8V1880.4H1625.5V1877.1H1630.7V1875.7H1635.9V1877.1H1651.0V1873.8H1672.3V1867.2H1678.0V1862.0H1682.5V1866.5H1688.0V1868.5H1693.5V1869.5H1698.5V1861.2H1704.0V1867.0H1709.0V1867.2H1714.5V1857.0H1719.5V1853.5H1725.0V1855.0H1735.0V1857.5H1740.5V1859.0H1746.0V1716.5H1751.5V1850.0H1756.5V1852.5H1761.5V1717.2H1767.0V1852.5H1772.0V1850.0H1777.0V1849.0H1782.4V1852.5H1793.0V1851.0H1798.5V1848.0H1823.9V1850.5H1829.4V1712.5H1834.9V1847.5H1839.9V1713.0H1845.4V1850.5H1855.9V1846.5H1857.0" stroke="#00d2d5"/>
<path d="M348.9 1838.9H384.2V1843.6H400.0V1838.9H420.0V1840.0H467.8V1844.2H483.6V1838.6H499.5V1708.0H504.2V1842.6H515.2V1843.0H520.4V1845.7H530.0V1846.0H541.2V1850.7H566.8V1843.7H587.9V1845.8H619.5V1839.5H625.4V1847.0H630.7V1850.7H645.1V1845.8H661.6V1839.5H667.5V1846.7H703.0V1839.9H708.9V1847.0H714.2V1850.7H734.6V1846.0H775.0V1847.1H808.6V1850.7H828.3V1846.3H898.0V1850.7H912.5V1846.7H971.0V1850.7H975.7V1849.7H986.2V1844.7H1001.3V1836.8H1012.5V1845.4H1020.0V1845.7H1027.9V1847.0H1043.7V1850.3H1059.5V1845.7H1064.7V1856.2H1070.7V1844.3H1075.3V1845.7H1081.2V1849.6H1085.8V1853.6H1091.7V1858.2H1096.3V1863.4H1101.6V1874.0H1106.8V1879.2H1112.1V1885.8H1117.4V1747.6H1122.6V1740.8H1127.9V1879.9H1133.2V1895.0H1138.4V1886.4H1143.0V1872.6H1148.9V1895.0H1153.6V1881.2H1159.5V1871.3H1164.7V1895.0H1195.7V1785.1H1201.6V1788.2H1206.6V1895.0H1216.7V1788.2H1222.6V1869.3H1227.9V1854.2H1232.5V1850.9H1237.8V1862.1H1249.0V1863.4H1253.6V1869.3H1258.8V1879.2H1264.6V1895.0H1305.4V1877.6H1310.7V1868.4H1315.9V1866.4H1321.2V1864.5H1326.4V1867.8H1331.7V1872.4H1337.0V1879.0H1342.2V1895.0H1556.8V1872.4H1567.7V1876.2H1572.9V1895.0H1593.3V1872.4H1599.0V1860.1H1604.6V1895.0H1672.3V1878.5H1677.5V1869.0H1682.5V1884.0H1688.0V1883.0H1698.5V1860.5H1704.0V1869.0H1709.0V1877.5H1714.5V1860.5H1719.5V1856.0H1725.0V1850.0H1735.0V1852.5H1740.5V1847.0H1746.0V1849.5H1751.5V1840.5H1756.5V1848.5H1761.5V1846.5H1767.0V1842.5H1777.0V1805.5H1782.4V1839.5H1787.4V1806.5H1793.0V1848.5H1798.5V1841.5H1823.9V1834.5H1829.4V1844.0H1839.9V1838.5H1845.4V1839.5H1855.9V1844.0H1857.0" stroke="#44739e"/>
<path d="M348.9 1809.5H352.6V1804.5H357.4V1811.0H363.1V1808.4H368.4V1803.1H373.7V1805.8H378.9V1806.8H384.2V1804.5H394.7V1808.4H400.0V1806.8H404.7V1803.1H410.0V1810.5H415.2V1806.8H425.7V1817.1H431.0V1808.7H436.3V1813.1H446.8V1814.7H452.0V1812.6H462.6V1808.4H467.8V1812.6H473.1V1814.0H478.3V1812.6H483.6V1808.7H488.9V1810.5H494.1V1828.9H498.6V1689.0H505.2V1842.1H509.9V1840.7H515.2V1841.5H520.4V1843.6H525.7V1852.6H980.9V1852.0H986.2V1853.3H991.4V1842.1H997.4V1845.4H1003.3V1843.4H1020.0V1843.7H1027.9V1842.4H1033.2V1843.9H1043.7V1845.7H1048.9V1843.9H1059.5V1843.4H1064.7V1849.6H1070.7V1852.6H1075.3V1849.6H1080.5V1854.2H1085.8V1855.5H1091.0V1858.2H1096.3V1859.5H1101.6V1861.4H1106.8V1868.0H1112.1V1869.3H1117.4V1870.0H1122.6V1873.3H1127.9V1875.9H1138.4V1879.2H1143.7V1868.0H1148.9V1884.5H1154.2V1886.4H1158.8V1865.4H1164.7V1884.5H1170.0V1895.0H1185.1V1879.9H1191.1V1895.0H1195.7V1754.5H1201.6V1895.0H1217.4V1858.8H1222.6V1858.2H1227.2V1853.6H1232.5V1851.6H1243.7V1850.9H1253.6V1856.2H1258.8V1861.4H1264.6V1879.0H1269.2V1886.2H1274.5V1895.0H1289.6V1865.1H1305.4V1857.2H1310.7V1850.7H1315.9V1853.7H1320.5V1852.6H1325.8V1853.3H1331.1V1855.9H1336.3V1863.2H1342.2V1868.4H1346.8V1871.7H1352.1V1879.0H1358.0V1895.0H1378.4V1869.1H1384.3V1895.0H1394.2V1885.5H1400.8V1895.0H1420.5V1870.4H1426.4V1895.0H1431.1V1871.0H1437.0V1895.0H1494.2V1875.0H1499.5V1895.0H1514.7V1885.2H1520.4V1879.0H1525.6V1877.0H1530.3V1875.7H1536.0V1873.8H1541.2V1871.0H1546.9V1863.4H1551.6V1855.8H1556.8V1848.2H1562.5V1847.3H1567.7V1852.0H1572.9V1863.4H1583.3V1859.6H1588.1V1858.4H1593.3V1848.2H1599.0V1844.2H1604.6V1854.9H1619.3V1853.6H1625.0V1852.3H1630.7V1850.6H1635.9V1848.9H1645.8V1847.8H1651.0V1841.6H1656.7V1847.3H1661.9V1848.7H1672.3V1843.5H1678.0V1842.5H1682.5V1843.5H1688.0V1845.5H1693.5V1844.0H1698.5V1841.0H1704.0V1841.8H1709.0V1847.5H1714.5V1846.5H1730.0V1844.5H1735.0V1845.5H1740.5V1843.5H1778.0V1841.5H1788.0V1843.0H1793.0V1840.5H1798.0V1837.5H1803.4V1840.0H1813.4V1839.0H1818.9V1829.0H1824.4V1830.0H1829.4V1831.0H1834.9V1831.2H1850.9V1819.5H1857.0" stroke="#984ea3"/>
</g></svg>
<div class="t" style="top:1610.90px;font-size:14px;line-height:17.50px;color:#a8a8a8;left:712.10px;transform:scaleX(0.944);transform-origin:0 50%;">SDM630 SDM630 ENERGY Power 1</div>
<div class="t" style="top:1610.90px;font-size:14px;line-height:17.50px;color:#a8a8a8;left:970.00px;transform:scaleX(0.944);transform-origin:0 50%;">SDM630 SDM630 ENERGY Power 2</div>
<div class="t" style="top:1610.90px;font-size:14px;line-height:17.50px;color:#a8a8a8;left:1228.00px;transform:scaleX(0.944);transform-origin:0 50%;">SDM630 SDM630 ENERGY Power 3</div>
<div class="t" style="top:1634.64px;font-size:12px;line-height:15.00px;color:#9b9b9b;right:1563.50px;text-align:right;">3,000</div>
<div class="t" style="top:1706.64px;font-size:12px;line-height:15.00px;color:#9b9b9b;right:1563.50px;text-align:right;">2,000</div>
<div class="t" style="top:1778.64px;font-size:12px;line-height:15.00px;color:#9b9b9b;right:1563.50px;text-align:right;">1,000</div>
<div class="t" style="top:1851.64px;font-size:12px;line-height:15.00px;color:#9b9b9b;right:1563.50px;text-align:right;">0</div>
<div class="t" style="top:1816.34px;font-size:12px;line-height:15.00px;color:#9b9b9b;left:89.80px;width:400px;text-align:center;transform:rotate(-90deg);transform-origin:200px 50%;">W</div>
</body></html>
